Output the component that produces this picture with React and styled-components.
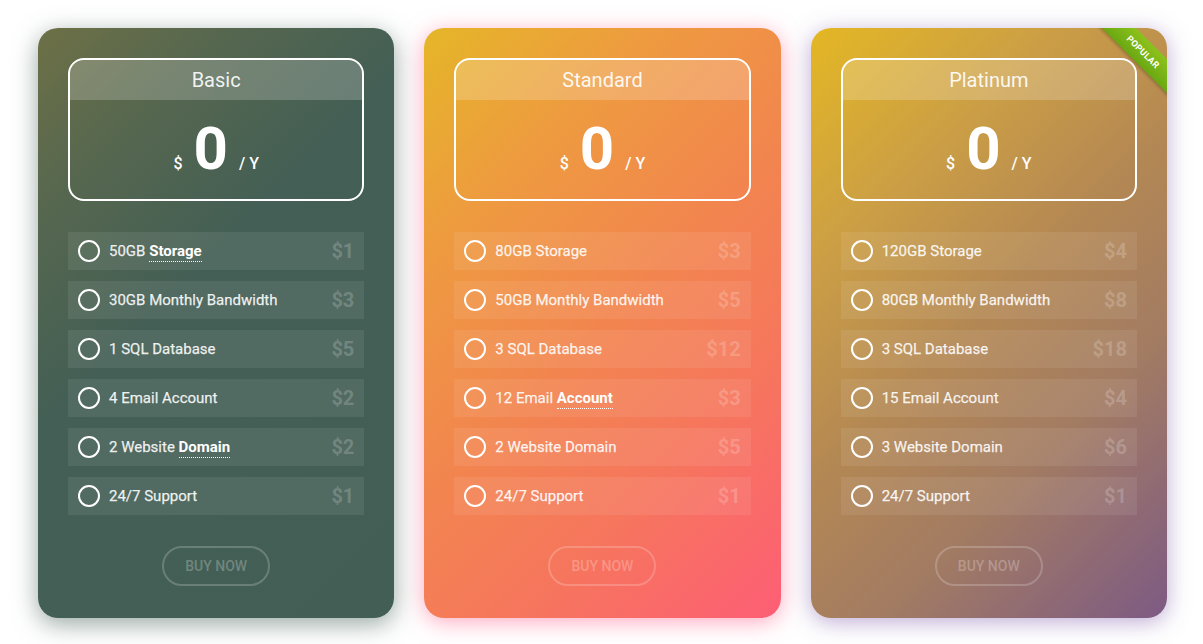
import React from "react";
import styled, { createGlobalStyle } from "styled-components";

const Global = createGlobalStyle`
  html, body { margin: 0; padding: 0; background: #fff; }
  body { font-family: Roboto, "Liberation Sans", sans-serif; }
`;

const Page = styled.div`
  display: flex;
  gap: 30px;
  padding: 28px 0 0 38px;
  height: 644px;
  box-sizing: border-box;
  overflow: hidden;
`;

const Card = styled.div`
  position: relative;
  flex: 0 0 356.33px;
  height: 590px;
  box-sizing: border-box;
  border-radius: 20px;
  overflow: hidden;
  padding: 30px 30px 0;
  background: ${(p) => p.$bg};
  box-shadow: ${(p) => p.$shadow};
  display: flex;
  flex-direction: column;
`;

const PriceBox = styled.div`
  height: 143px;
  box-sizing: border-box;
  border: 2px solid #fff;
  border-radius: 16px;
  overflow: hidden;
`;

const Title = styled.div`
  height: 40px;
  line-height: 40px;
  text-align: center;
  font-size: 20px;
  color: rgba(255, 255, 255, 0.92);
  background: rgba(255, 255, 255, 0.2);
`;

const PriceRow = styled.div`
  display: flex;
  justify-content: center;
  align-items: baseline;
  padding-top: 19px;
  color: #fff;
`;

const Currency = styled.span`
  font-size: 16px;
  font-weight: 500;
  margin-right: 11px;
`;

const Amount = styled.span`
  font-size: 60px;
  line-height: 60px;
  font-weight: 700;
  margin-right: 11px;
`;

const Period = styled.span`
  font-size: 16px;
  font-weight: 500;
`;

const Features = styled.ul`
  list-style: none;
  margin: 31px 0 0;
  padding: 0;
  display: flex;
  flex-direction: column;
  gap: 11px;
`;

const Feature = styled.li`
  height: 38px;
  display: flex;
  align-items: center;
  padding: 0 10px;
  background: rgba(255, 255, 255, 0.08);
`;

const Check = styled.span`
  width: 22px;
  height: 22px;
  box-sizing: border-box;
  border: 2px solid #fff;
  border-radius: 50%;
  flex: none;
`;

const Label = styled.span`
  margin-left: 9px;
  font-size: 15px;
  font-weight: 400;
  color: rgba(255, 255, 255, 0.88);
  flex: 1;
  -webkit-text-stroke: 0.25px rgba(255, 255, 255, 0.88);
`;

const Strong = styled.b`
  font-weight: 700;
  color: #fff;
  border-bottom: 1px dotted #fff;
  padding-bottom: 1px;
  -webkit-text-stroke: 0;
`;

const Cost = styled.span`
  font-size: 20px;
  font-weight: 700;
  color: rgba(255, 255, 255, 0.2);
`;

const Buy = styled.button`
  margin: 31px auto 0;
  width: 108px;
  height: 40px;
  border: 2px solid rgba(255, 255, 255, 0.2);
  border-radius: 20px;
  background: transparent;
  font-family: Roboto, "Liberation Sans", sans-serif;
  font-size: 14px;
  font-weight: 500;
  color: rgba(255, 255, 255, 0.25);
  text-transform: uppercase;
  padding: 0;
`;

const RibbonWrap = styled.div`
  position: absolute;
  top: 0;
  right: 0;
  width: 80px;
  height: 80px;
  overflow: hidden;
`;

const Ribbon = styled.div`
  position: absolute;
  left: -3.5px;
  top: 11.5px;
  width: 120px;
  height: 24px;
  line-height: 24px;
  transform: rotate(45deg);
  background: linear-gradient(#8cc21c, #6aa812);
  box-shadow: 0 2px 3px rgba(0, 0, 0, 0.2);
  color: #fff;
  font-size: 9px;
  font-weight: 700;
  text-align: center;
  letter-spacing: 0.2px;
`;

const plans = [
  {
    name: "Basic",
    bg: "linear-gradient(135deg, #6d7046 0%, #56674f 20%, #445f55 42%, #435e55 100%)",
    shadow: "0 6px 24px rgba(67, 94, 85, 0.55)",
    items: [
      ["50GB ", "Storage", "$1"],
      ["30GB Monthly Bandwidth", null, "$3"],
      ["1 SQL Database", null, "$5"],
      ["4 Email Account", null, "$2"],
      ["2 Website ", "Domain", "$2"],
      ["24/7 Support", null, "$1"],
    ],
  },
  {
    name: "Standard",
    bg: "linear-gradient(135deg, #e5b628 0%, #ee9a40 25%, #f2854f 50%, #f6765d 72%, #fd5e75 100%)",
    shadow: "0 4px 22px rgba(255, 100, 140, 0.55)",
    items: [
      ["80GB Storage", null, "$3"],
      ["50GB Monthly Bandwidth", null, "$5"],
      ["3 SQL Database", null, "$12"],
      ["12 Email ", "Account", "$3"],
      ["2 Website Domain", null, "$5"],
      ["24/7 Support", null, "$1"],
    ],
  },
  {
    name: "Platinum",
    bg: "linear-gradient(135deg, #e4b724 0%, #cc9f45 25%, #b48853 48%, #a27b63 70%, #7d5a84 100%)",
    shadow: "0 4px 22px rgba(125, 90, 170, 0.5)",
    popular: true,
    items: [
      ["120GB Storage", null, "$4"],
      ["80GB Monthly Bandwidth", null, "$8"],
      ["3 SQL Database", null, "$18"],
      ["15 Email Account", null, "$4"],
      ["3 Website Domain", null, "$6"],
      ["24/7 Support", null, "$1"],
    ],
  },
];

export default function App() {
  return (
    <>
      <Global />
      <Page>
        {plans.map((p) => (
          <Card key={p.name} $bg={p.bg} $shadow={p.shadow}>
            {p.popular && (
              <RibbonWrap>
                <Ribbon>POPULAR</Ribbon>
              </RibbonWrap>
            )}
            <PriceBox>
              <Title>{p.name}</Title>
              <PriceRow>
                <Currency>$</Currency>
                <Amount>0</Amount>
                <Period>/ Y</Period>
              </PriceRow>
            </PriceBox>
            <Features>
              {p.items.map(([text, bold, cost]) => (
                <Feature key={text + (bold || "")}>
                  <Check />
                  <Label>
                    {text}
                    {bold && <Strong>{bold}</Strong>}
                  </Label>
                  <Cost>{cost}</Cost>
                </Feature>
              ))}
            </Features>
            <Buy>Buy Now</Buy>
          </Card>
        ))}
      </Page>
    </>
  );
}
